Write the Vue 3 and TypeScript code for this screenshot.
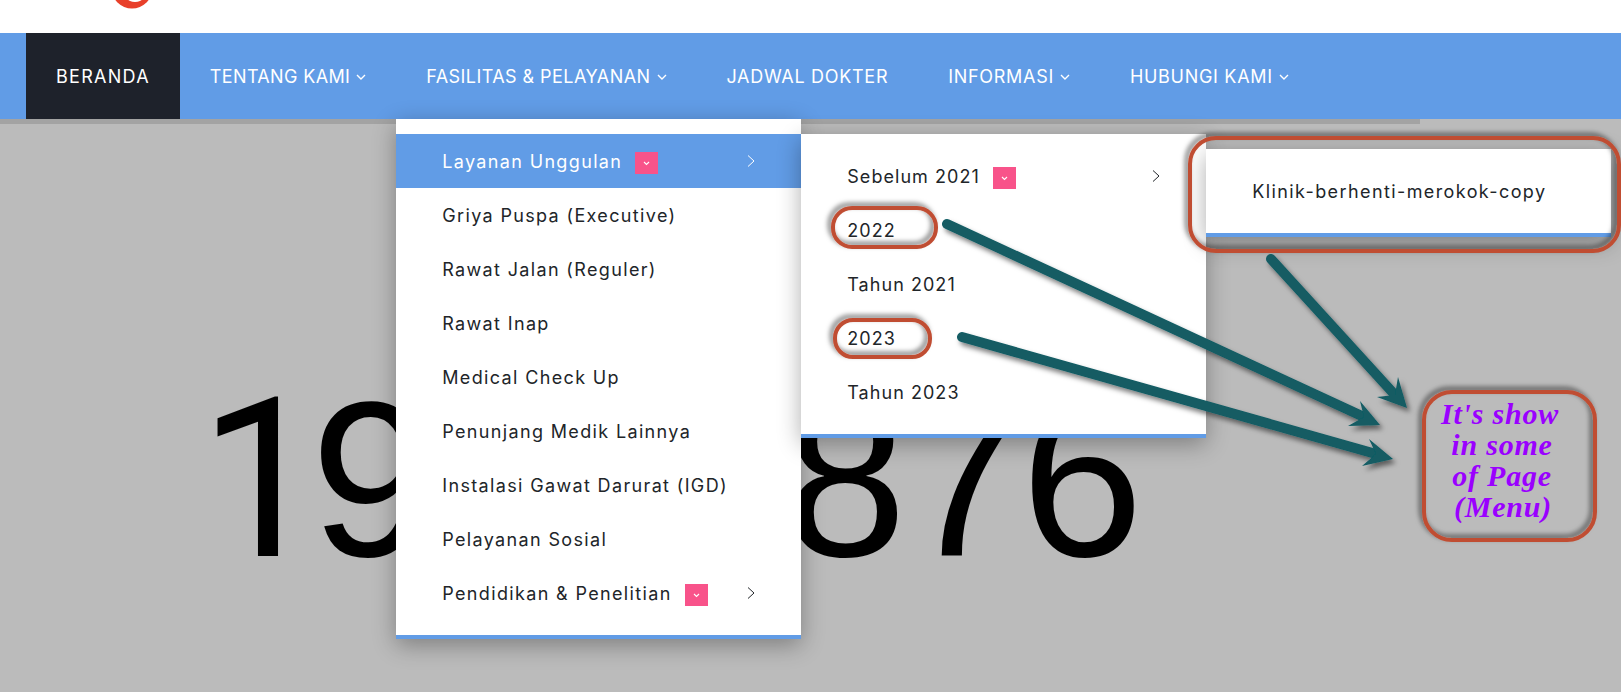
<template>
  <div class="page">
    <header class="top">
      <svg class="logo" width="34" height="9" viewBox="0 0 34 9">
        <circle cx="17" cy="-12" r="20.5" fill="#e8402a" />
        <ellipse cx="20" cy="-1" rx="7" ry="3" fill="#fff" />
      </svg>
    </header>

    <nav class="nav">
      <div
        v-for="item in navItems"
        :key="item.label"
        class="nav-item"
        :class="{ current: item.current }"
      >
        <span :style="{ letterSpacing: item.spacing + 'px' }">{{ item.label }}</span>
        <svg v-if="item.caret" class="caret" width="10" height="6" viewBox="0 0 10 6">
          <path d="M1 1 L5 5 L9 1" fill="none" stroke="#fff" stroke-width="1.4" />
        </svg>

        <ul v-if="item.menu" class="menu">
          <li class="row active">
            <span>Layanan Unggulan</span>
            <span class="badge"><svg width="7" height="5" viewBox="0 0 7 5"><path d="M1 1 L3.5 3.5 L6 1" fill="none" stroke="#fff" stroke-width="1.1" /></svg></span>
            <svg class="more" width="8" height="12" viewBox="0 0 8 12"><path d="M1 0.5 L7 6 L1 11.5" fill="none" stroke="currentColor" /></svg>

            <ul class="menu sub">
              <li class="row">
                <span>Sebelum 2021</span>
                <span class="badge"><svg width="7" height="5" viewBox="0 0 7 5"><path d="M1 1 L3.5 3.5 L6 1" fill="none" stroke="#fff" stroke-width="1.1" /></svg></span>
                <svg class="more" width="8" height="12" viewBox="0 0 8 12"><path d="M1 0.5 L7 6 L1 11.5" fill="none" stroke="currentColor" /></svg>

                <ul class="menu sub third">
                  <li class="row">Klinik-berhenti-merokok-copy</li>
                </ul>
              </li>
              <li v-for="y in yearRows" :key="y" class="row">{{ y }}</li>
            </ul>
          </li>
          <li v-for="m in mainRows" :key="m" class="row">{{ m }}</li>
          <li class="row">
            <span>Pendidikan &amp; Penelitian</span>
            <span class="badge"><svg width="7" height="5" viewBox="0 0 7 5"><path d="M1 1 L3.5 3.5 L6 1" fill="none" stroke="#fff" stroke-width="1.1" /></svg></span>
            <svg class="more" width="8" height="12" viewBox="0 0 8 12"><path d="M1 0.5 L7 6 L1 11.5" fill="none" stroke="currentColor" /></svg>
          </li>
        </ul>
      </div>
    </nav>
    <div class="band"></div>

    <main class="hero"><span class="one">1</span>9345876</main>

    <!-- annotations drawn on top of the screenshot -->
    <svg class="notes" width="1621" height="692" viewBox="0 0 1621 692">
      <defs>
        <filter id="ringShadow" x="-20%" y="-40%" width="140%" height="180%">
          <feDropShadow dx="-3" dy="-3" stdDeviation="2.5" flood-color="#000" flood-opacity="0.55" />
        </filter>
        <filter id="arrowShadow" x="-10%" y="-20%" width="120%" height="140%">
          <feDropShadow dx="3" dy="4" stdDeviation="2.5" flood-color="#000" flood-opacity="0.5" />
        </filter>
      </defs>

      <g fill="none" stroke="#c04d33" stroke-width="4" filter="url(#ringShadow)">
        <rect v-for="r in rings" :key="r.x" :x="r.x" :y="r.y" :width="r.w" :height="r.h" :rx="r.rx" />
      </g>

      <g v-for="a in arrows" :key="a.head" filter="url(#arrowShadow)">
        <line :x1="a.x1" :y1="a.y1" :x2="a.x2" :y2="a.y2" stroke="#125c64" stroke-width="10" stroke-linecap="round" />
        <polygon :points="a.head" fill="#125c64" />
      </g>

      <text class="note-text" text-anchor="middle">
        <tspan x="1500" y="424">It's show</tspan>
        <tspan x="1502" y="455">in some</tspan>
        <tspan x="1502" y="486">of Page</tspan>
        <tspan x="1503" y="517">(Menu)</tspan>
      </text>
    </svg>
  </div>
</template>

<script setup lang="ts">
type NavItem = { label: string; spacing: number; caret?: boolean; current?: boolean; menu?: boolean };

const navItems: NavItem[] = [
  { label: 'BERANDA', spacing: 1.27, current: true },
  { label: 'TENTANG KAMI', spacing: 0.35, caret: true },
  { label: 'FASILITAS & PELAYANAN', spacing: 0.44, caret: true, menu: true },
  { label: 'JADWAL DOKTER', spacing: 0.7 },
  { label: 'INFORMASI', spacing: 0.7, caret: true },
  { label: 'HUBUNGI KAMI', spacing: 0.7, caret: true },
];

const mainRows = [
  'Griya Puspa (Executive)',
  'Rawat Jalan (Reguler)',
  'Rawat Inap',
  'Medical Check Up',
  'Penunjang Medik Lainnya',
  'Instalasi Gawat Darurat (IGD)',
  'Pelayanan Sosial',
];

const yearRows = ['2022', 'Tahun 2021', '2023', 'Tahun 2023'];

const rings = [
  { x: 1190, y: 138, w: 429, h: 113, rx: 26 },
  { x: 833, y: 208, w: 103, h: 39, rx: 19 },
  { x: 835, y: 320, w: 95, h: 37, rx: 18 },
  { x: 1424, y: 392, w: 171, h: 148, rx: 28 },
];

const arrows = [
  { x1: 947, y1: 224, x2: 1364, y2: 417, head: '1380,425 1360,401 1364,417 1348,426' },
  { x1: 962, y1: 337, x2: 1376, y2: 454, head: '1393,459 1369,439 1376,454 1362,466' },
  { x1: 1271, y1: 259, x2: 1395, y2: 395, head: '1407,408 1398,377 1395,395 1377,397' },
];
</script>

<style>
html,
body {
  margin: 0;
  background: #bbbbbb;
}
</style>

<style scoped>
.page {
  position: relative;
  width: 1621px;
  height: 692px;
  overflow: hidden;
  font-family: Inter, "Liberation Sans", sans-serif;
  display: flex;
  flex-direction: column;
}

.top {
  height: 33px;
  flex: none;
  background: #fff;
  padding-left: 115px;
  box-sizing: border-box;
}

.logo {
  display: block;
}

.nav {
  flex: none;
  height: 86px;
  display: flex;
  padding-left: 26px;
  background: #619ce6;
  position: relative;
  z-index: 2;
}

.nav-item {
  position: relative;
  display: flex;
  align-items: center;
  gap: 6px;
  padding: 0 30px;
  color: #fff;
  font-size: 18px;
}

.nav-item.current {
  background: #1e222b;
}

.caret {
  margin-top: 1px;
}

.band {
  flex: none;
  width: 1420px;
  height: 5px;
  background: #a3a3a3;
}

.hero {
  flex: 1;
  padding: 245px 0 0 199px;
  font-family: "Liberation Sans", Arial, sans-serif;
  font-size: 220px;
  line-height: 1;
  letter-spacing: -4px;
  color: #000;
}

/* Liberation's 1 has a foot, the reference's has not */
.one {
  font-family: Roboto, sans-serif;
  font-size: 222px;
  letter-spacing: -13px;
}

.menu {
  position: absolute;
  top: 100%;
  left: 0;
  width: 405px;
  margin: 0;
  padding: 15px 0;
  box-sizing: border-box;
  list-style: none;
  background: #fff;
  border-bottom: 4px solid #619ce6;
  box-shadow: 0 6px 22px rgba(0, 0, 0, 0.32);
  color: #212529;
  font-size: 18px;
  letter-spacing: 1.35px;
}

.menu.sub {
  top: 0;
  left: 100%;
  letter-spacing: 1.05px;
}

.menu.third {
  z-index: 1;
  letter-spacing: 1.4px;
}

.row {
  position: relative;
  display: flex;
  align-items: center;
  height: 54px;
  padding: 0 46px;
  white-space: nowrap;
}

.row.active {
  background: #619ce6;
  color: #fff;
}

.row.active .menu {
  color: #212529;
}

.badge {
  width: 23px;
  height: 22px;
  margin: 4px 0 0 13px;
  flex: none;
  display: flex;
  align-items: center;
  justify-content: center;
  background: #f8538a;
}

.more {
  margin-left: auto;
}

.notes {
  position: absolute;
  top: 0;
  left: 0;
  z-index: 5;
  pointer-events: none;
}

.note-text {
  font-family: "Liberation Serif", serif;
  font-style: italic;
  font-weight: 700;
  font-size: 30px;
  letter-spacing: 0.8px;
  fill: #9a00ff;
}
</style>
